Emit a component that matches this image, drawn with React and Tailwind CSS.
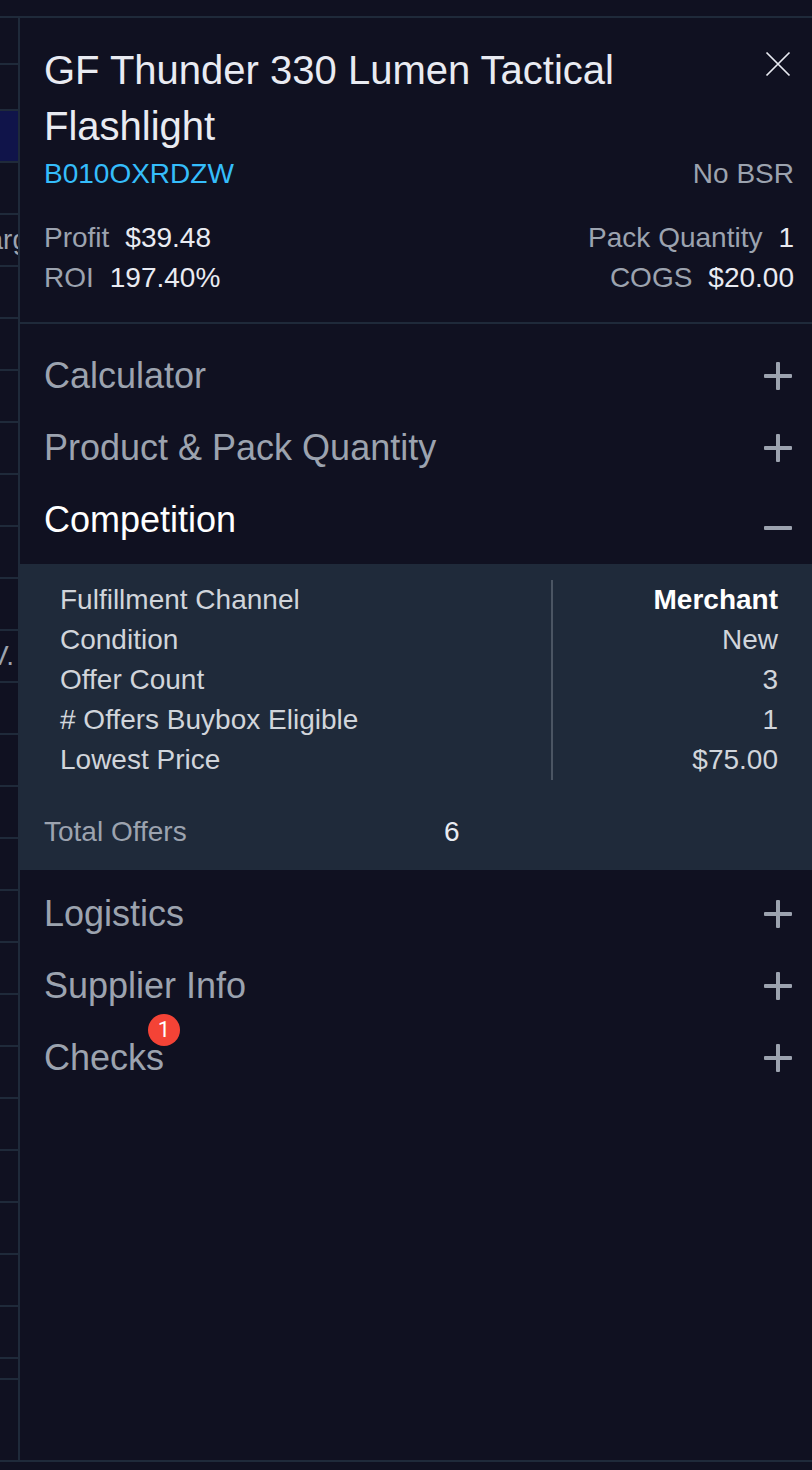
import React, { useState } from "react";

const orders = Array.from({ length: 24 }, (_, i) => {
  if (i === 2) return "arg";
  if (i === 10) return "V.";
  return "";
});

const offer = [
  ["Fulfillment Channel", "Merchant"],
  ["Condition", "New"],
  ["Offer Count", "3"],
  ["# Offers Buybox Eligible", "1"],
  ["Lowest Price", "$75.00"],
];

function GridEdge() {
  return (
    <div className="flex w-[18px] shrink-0 flex-col overflow-hidden text-[28px] text-[#9ca3af]">
      <div className="h-[47px] border-b-2 border-[#1f2a3a]" />
      <div className="h-[46px] border-b-2 border-[#1f2a3a]" />
      {orders.map((text, i) => (
        <div
          key={i}
          className={`flex h-[52px] items-center justify-end border-b-2 border-[#1f2a3a] ${i === 0 ? "bg-[#10144a]" : ""}`}
        >
          {text && <span className={text === "arg" ? "-mr-2.5" : "mr-1"}>{text}</span>}
        </div>
      ))}
      <div className="h-[21px] border-b-2 border-[#1f2a3a]" />
    </div>
  );
}

function Stat({ label, value }) {
  return (
    <div className="flex gap-4">
      <dt className="text-[#9ca3af]">{label}</dt>
      <dd className="text-[#e9ebf2]">{value}</dd>
    </div>
  );
}

function ToggleIcon({ open }) {
  return (
    <svg
      viewBox="0 0 32 32"
      className="size-8 shrink-0 text-[#9ca3af]"
      fill="currentColor"
      aria-hidden="true"
    >
      {open ? (
        <rect x="2" y="22" width="28" height="4" rx="1" />
      ) : (
        <path d="M15 2h2a1 1 0 0 1 1 1v11h11a1 1 0 0 1 1 1v2a1 1 0 0 1-1 1H18v11a1 1 0 0 1-1 1h-2a1 1 0 0 1-1-1V18H3a1 1 0 0 1-1-1v-2a1 1 0 0 1 1-1h11V3a1 1 0 0 1 1-1z" />
      )}
    </svg>
  );
}

function Section({ title, badge, open, onToggle, children }) {
  return (
    <section>
      <h2>
        <button
          type="button"
          onClick={onToggle}
          aria-expanded={open}
          className="flex h-[72px] w-full items-center justify-between pr-[18px] pl-6 text-left text-[36px] leading-[72px] text-[#9ca3af]"
        >
          <span className={`relative ${open ? "text-white" : ""}`}>
            {title}
            {badge && (
              <span className="absolute -top-2 -right-4 flex h-8 min-w-8 items-center justify-center rounded-full bg-[#f44336] font-[Roboto,sans-serif] text-[22px] leading-8 text-white">
                {badge}
              </span>
            )}
          </span>
          <ToggleIcon open={open} />
        </button>
      </h2>
      {open && children}
    </section>
  );
}

function Competition() {
  return (
    <div className="my-2 bg-[#1f2a3a] pt-4 pr-[18px] pb-[18px] pl-6 text-[28px] leading-10">
      <div className="px-4">
        <table className="w-full border-collapse text-[#d1d5db]">
          <tbody>
            {offer.map(([label, value], i) => (
              <tr key={label}>
                <th scope="row" className="p-0 text-left font-normal">
                  {label}
                </th>
                <td
                  className={`w-[226px] border-l-2 border-[#4b5563] p-0 text-right ${i === 0 ? "font-bold text-white" : ""}`}
                >
                  {value}
                </td>
              </tr>
            ))}
          </tbody>
        </table>
      </div>
      <dl className="mt-8 flex">
        <dt className="w-[400px] text-[#9ca3af]">Total Offers</dt>
        <dd className="text-[#e9ebf2]">6</dd>
      </dl>
    </div>
  );
}

const sections = [
  { title: "Calculator" },
  { title: "Product & Pack Quantity" },
  { title: "Competition" },
  { title: "Logistics" },
  { title: "Supplier Info" },
  { title: "Checks", badge: 1 },
];

export default function App() {
  const [opened, setOpened] = useState("Competition");
  return (
    <div className="flex min-h-screen flex-col bg-[#101121] pt-4 pb-2 font-['Liberation_Sans',Arial,sans-serif]">
      <div className="flex grow border-y-2 border-[#1f2a3a]">
        <GridEdge />
        <main className="min-w-0 grow border-l-2 border-[#1f2a3a]">
          <header className="border-b-2 border-[#1f2a3a] pt-6 pr-[18px] pb-6 pl-6 text-[28px] leading-10">
            <div className="flex items-start justify-between gap-6">
              <h1 className="max-w-[640px] text-[40px] leading-[56px] text-[#e9ebf2]">
                GF Thunder 330 Lumen Tactical Flashlight
              </h1>
              <button type="button" aria-label="Close" className="mt-1.5 shrink-0 text-[#e9ebf2]">
                <svg viewBox="0 0 32 32" className="size-8" fill="none" stroke="currentColor" strokeWidth="1.7">
                  <path d="M4.500 4.500L27.500 27.500M27.500 4.500L4.500 27.500" />
                </svg>
              </button>
            </div>
            <div className="flex justify-between">
              <a href="#product" className="text-[#35bdfb]">
                B010OXRDZW
              </a>
              <span className="text-[#9ca3af]">No BSR</span>
            </div>
            <div className="mt-6 flex justify-between">
              <dl>
                <Stat label="Profit" value="$39.48" />
                <Stat label="ROI" value="197.40%" />
              </dl>
              <dl className="flex flex-col items-end">
                <Stat label="Pack Quantity" value="1" />
                <Stat label="COGS" value="$20.00" />
              </dl>
            </div>
          </header>
          <div className="py-4">
            {sections.map(({ title, badge }) => (
              <Section
                key={title}
                title={title}
                badge={badge}
                open={opened === title}
                onToggle={() => setOpened(opened === title ? "" : title)}
              >
                <Competition />
              </Section>
            ))}
          </div>
        </main>
      </div>
    </div>
  );
}
